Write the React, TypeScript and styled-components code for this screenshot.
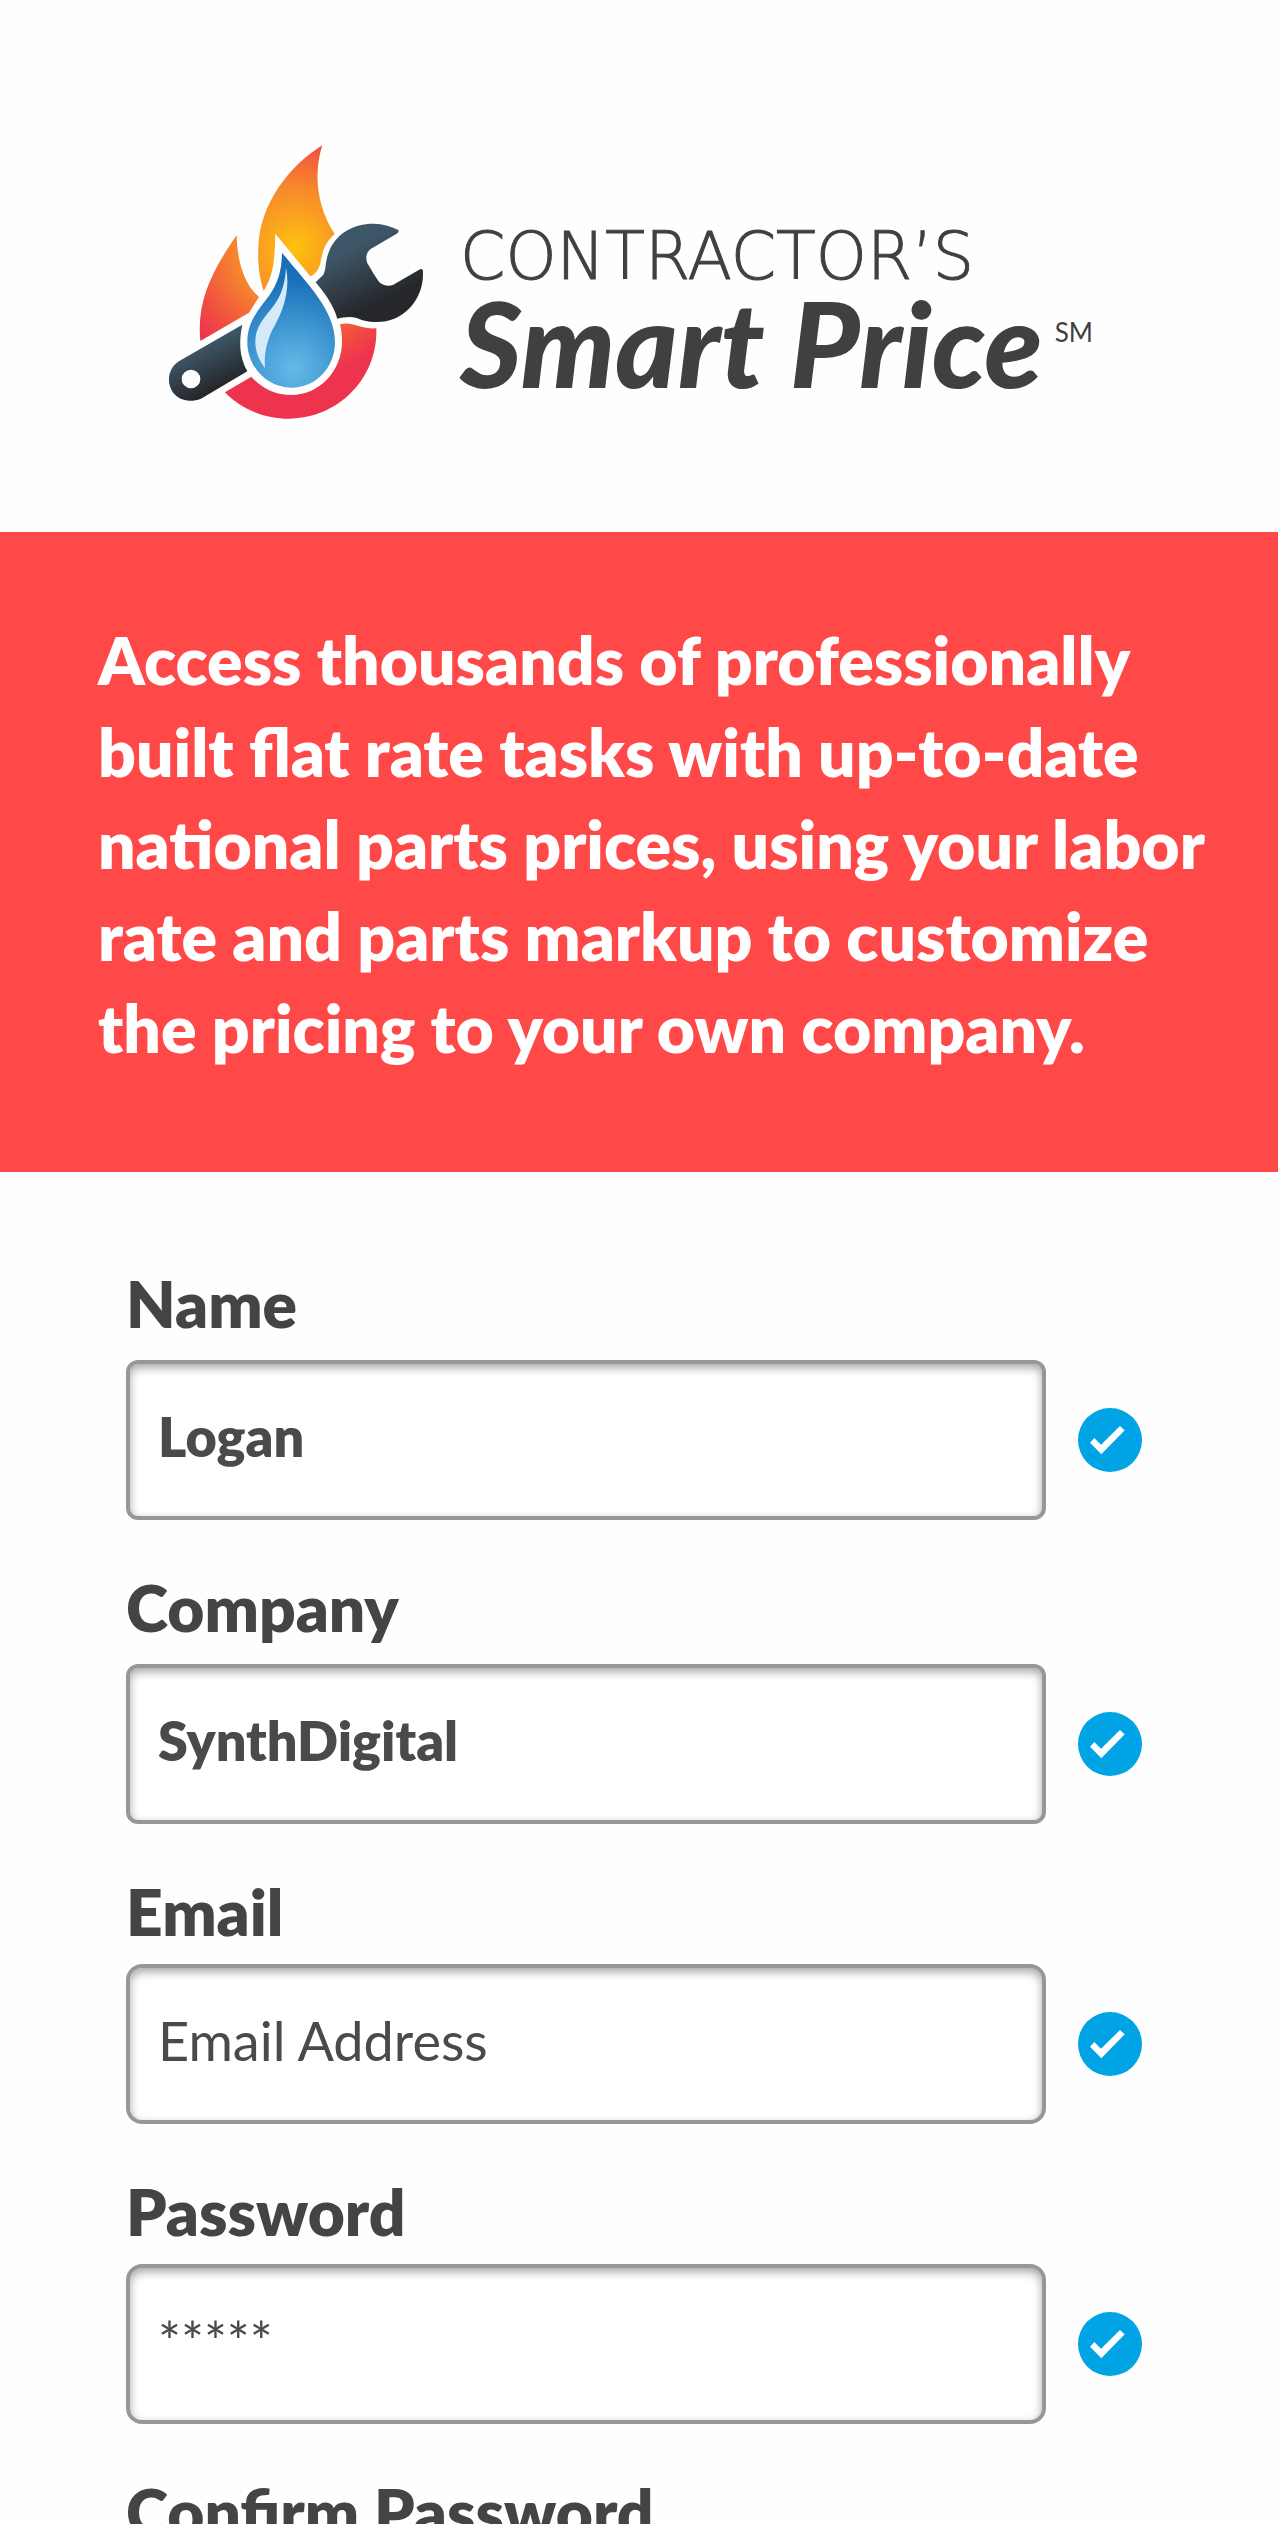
import React, { useId, useState } from "react";
import styled, { createGlobalStyle } from "styled-components";

const GlobalStyle = createGlobalStyle`
  *, *::before, *::after { box-sizing: border-box; }
  html, body { margin: 0; padding: 0; background: #fefefe; }
  body { font-family: Lato, "Open Sans", sans-serif; color: #444; }
`;

const Page = styled.div`
  height: 100vh;
  overflow-y: auto;
  scrollbar-width: none;
  background: #fefefe;
`;

const Header = styled.header`
  display: flex;
  align-items: flex-start;
  padding: 130px 80px 102px 150px;
`;

const Emblem = styled.svg`
  flex: none;
  display: block;
  width: 290px;
  height: 300px;
`;

const Wordmark = styled.h1`
  display: flex;
  flex-direction: column;
  margin: 0;
  padding: 88px 0 0 20px;
  color: #404040;
  white-space: nowrap;
`;

const BrandTop = styled.span`
  font-family: "DejaVu Sans", Lato, sans-serif;
  font-size: 65px;
  line-height: 78px;
  font-weight: 200;
  -webkit-text-stroke: 1px #404040;
`;

const BrandBottom = styled.span`
  display: flex;
  align-items: center;
  font-size: 119px;
  line-height: 92px;
  font-weight: 900;
  font-style: italic;
`;

const ServiceMark = styled.small`
  padding: 0 0 20px 12px;
  font-size: 26px;
  line-height: 32px;
  font-weight: 400;
  font-style: normal;
`;

const Banner = styled.section`
  background: #ff4949;
  padding: 82px 48px 98px 98px;
`;

const BannerText = styled.p`
  margin: 0;
  color: #fff;
  font-size: 66px;
  line-height: 92px;
  font-weight: 800;
  white-space: nowrap;
`;

const Form = styled.form`
  display: flex;
  flex-direction: column;
  padding: 92px 126px 92px;
`;

const Field = styled.div<{ $roomy?: boolean }>`
  display: grid;
  grid-template-columns: minmax(0, 920px) 64px;
  column-gap: 32px;
  row-gap: ${(p) => (p.$roomy ? 16 : 12)}px;
  align-items: center;
  margin-bottom: 48px;
`;

const Label = styled.label`
  grid-column: 1 / -1;
  font-size: 64px;
  line-height: 80px;
  font-weight: 800;
  color: #444;
`;

const TextBox = styled.input<{ $strong?: boolean }>`
  width: 100%;
  height: 160px;
  padding: 0 28px 8px;
  border: 4px solid #979797;
  border-radius: ${(p) => (p.$strong ? 12 : 16)}px;
  outline: none;
  background: #fff;
  box-shadow: inset 0 4px 10px rgba(0, 0, 0, 0.35);
  font-family: inherit;
  font-size: 54px;
  font-weight: ${(p) => (p.$strong ? 800 : 400)};
  color: #4a4a4a;
  &::placeholder { color: #4a4a4a; opacity: 1; }
`;

const Tick = styled.svg`
  display: block;
  width: 64px;
  height: 64px;
`;

function BrandEmblem() {
  return (
    <Emblem viewBox="0 0 870 900" aria-hidden="true">
      <defs>
        <radialGradient id="fire" gradientUnits="userSpaceOnUse" cx="435" cy="350" r="390">
          <stop offset="0" stopColor="#ffc20e" />
          <stop offset="0.45" stopColor="#f7892c" />
          <stop offset="0.8" stopColor="#f04e40" />
          <stop offset="1" stopColor="#ee334e" />
        </radialGradient>
        <linearGradient id="head" gradientUnits="userSpaceOnUse" x1="620" y1="350" x2="700" y2="510">
          <stop offset="0" stopColor="#3d5668" />
          <stop offset="1" stopColor="#26272b" />
        </linearGradient>
        <linearGradient id="handle" gradientUnits="userSpaceOnUse" x1="160" y1="655" x2="215" y2="765">
          <stop offset="0" stopColor="#3d5464" />
          <stop offset="1" stopColor="#26272b" />
        </linearGradient>
        <radialGradient id="water" gradientUnits="userSpaceOnUse" cx="430" cy="715" r="265">
          <stop offset="0" stopColor="#63bce9" />
          <stop offset="1" stopColor="#1a70b8" />
        </radialGradient>
      </defs>
      <path fill="url(#fire)" d="M517 46C490 130 500 230 554 312C525 338 518 362 512 395C508 415 497 432 481 439L376 311C374 370 375 430 341 483C325 430 323 390 325 350C330 220 420 105 517 46Z" />
      <path fill="url(#fire)" d="M260 316C262 400 285 465 327 501L297 548L151 633C140 520 180 430 260 316Z" />
      <path fill="url(#fire)" d="M225 787L304 740C335 775 375 795 425 795C510 795 576 720 576 636C576 615 574 600 570 583C590 578 608 582 625 588C645 594 660 596 679 595C684 745 565 866 417 866C340 866 270 835 225 787Z" />
      <path fill="url(#handle)" fillRule="evenodd" d="M277 584L93 690C58 708 50 745 62 775C77 810 115 820 153 806L292 724C268 680 266 635 277 584ZM123 719A28 28 0 1 0 123 775A28 28 0 1 0 123 719Z" />
      <path fill="url(#head)" d="M497 457L520 434C530 415 524 395 538 362C560 310 610 281 670 281C700 281 725 290 746 301C746 308 742 311 735 314L662 357C648 368 646 385 652 400C665 420 675 440 688 457C700 468 718 470 730 464L810 418C815 415 819 418 819 425C822 510 760 576 680 576C650 576 635 570 620 564C600 558 580 562 562 566C550 525 525 490 497 457Z" />
      <path fill="url(#water)" d="M396 368C470 460 555 540 555 636C555 715 495 773 425 773C350 773 292 710 292 636C292 580 320 545 355 500C385 460 395 420 396 368Z" />
      <path fill="#d5eaf8" d="M408 413C420 470 405 530 375 585C350 630 342 670 345 714C318 680 310 640 320 605C335 560 370 540 390 495C403 465 406 440 408 413Z" />
    </Emblem>
  );
}

interface FormRowProps {
  label: string;
  initial?: string;
  placeholder?: string;
  type?: string;
  roomy?: boolean;
  strong?: boolean;
}

function FormRow({ label, initial = "", placeholder, type = "text", roomy, strong }: FormRowProps) {
  const id = useId();
  const [value, setValue] = useState(initial);
  return (
    <Field $roomy={roomy}>
      <Label htmlFor={id}>{label}</Label>
      <TextBox
        id={id}
        type={type}
        value={value}
        placeholder={placeholder}
        $strong={strong}
        onChange={(e) => setValue(e.target.value)}
      />
      <Tick viewBox="0 0 64 64" role="img" aria-label="Valid">
        <circle cx="32" cy="32" r="32" fill="#00a3e4" />
        <path fill="#fff" d="M12 34.7L16.3 30L23 36.7L42 18L46.7 22.3L23.3 46.3Z" />
      </Tick>
    </Field>
  );
}

export default function App() {
  return (
    <Page>
      <GlobalStyle />
      <Header>
        <BrandEmblem />
        <Wordmark>
          <BrandTop>CONTRACTOR’S</BrandTop>
          <BrandBottom>
            Smart Price
            <ServiceMark>SM</ServiceMark>
          </BrandBottom>
        </Wordmark>
      </Header>
      <Banner>
        <BannerText>
          Access thousands of professionally
          <br />
          built flat rate tasks with up-to-date
          <br />
          national parts prices, using your labor
          <br />
          rate and parts markup to customize
          <br />
          the pricing to your own company.
        </BannerText>
      </Banner>
      <Form onSubmit={(e) => e.preventDefault()}>
        <FormRow label="Name" initial="Logan" roomy strong />
        <FormRow label="Company" initial="SynthDigital" roomy strong />
        <FormRow label="Email" type="email" placeholder="Email Address" />
        <FormRow label="Password" placeholder="*****" />
        <FormRow label="Confirm Password" placeholder="*****" />
      </Form>
    </Page>
  );
}
